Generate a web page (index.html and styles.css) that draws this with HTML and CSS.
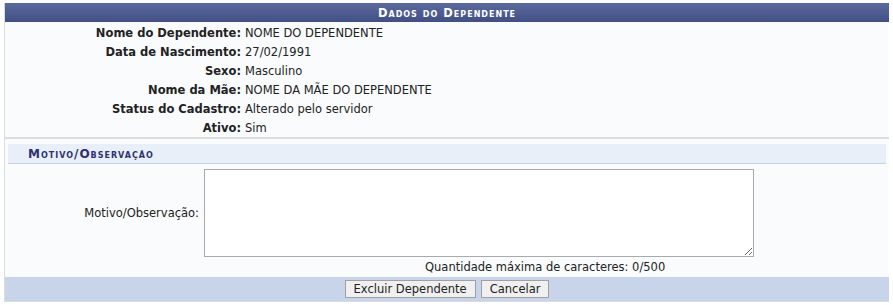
FILE: index.html
```html
<!DOCTYPE html>
<html lang="pt-BR">
<head>
    <meta charset="UTF-8">
    <title>Dados do Dependente</title>
    <link rel="stylesheet" href="styles.css">
</head>
<body>
    <div class="formulario">
        <div class="caption">Dados do Dependente</div>

        <div class="dados">
            <div class="rotulo">Nome do Dependente:</div><div class="valor">NOME DO DEPENDENTE</div>
            <div class="rotulo">Data de Nascimento:</div><div class="valor">27/02/1991</div>
            <div class="rotulo">Sexo:</div><div class="valor">Masculino</div>
            <div class="rotulo">Nome da Mãe:</div><div class="valor">NOME DA MÃE DO DEPENDENTE</div>
            <div class="rotulo">Status do Cadastro:</div><div class="valor">Alterado pelo servidor</div>
            <div class="rotulo">Ativo:</div><div class="valor">Sim</div>
        </div>

        <div class="subtitulo">Motivo/Observação</div>

        <div class="motivo">
            <label for="motivo">Motivo/Observação:</label>
            <textarea id="motivo"></textarea>
            <div class="contador">Quantidade máxima de caracteres: <span id="qtd">0</span>/500</div>
        </div>

        <div class="rodape">
            <button type="button">Excluir Dependente</button>
            <button type="button">Cancelar</button>
        </div>
    </div>

    <script>
        document.getElementById('motivo').addEventListener('input', function() {
            document.getElementById('qtd').textContent = this.value.length;
        });
    </script>
</body>
</html>
```

FILE: styles.css
```css
body {
    margin: 3px 4px;
    font-family: Verdana, "DejaVu Sans", sans-serif;
    font-size: 11.5px;
    color: #222;
}
.formulario {
    width: 884px;
    background-color: #f9fbfd;
    border-left: 1px solid #dcdcdc;
    border-right: 1px solid #dcdcdc;
    border-bottom: 1px solid #dcdcdc;
}
.caption {
    height: 19px;
    line-height: 20px;
    text-align: center;
    color: #fff;
    font-weight: bold;
    font-variant: small-caps;
    letter-spacing: 1px;
    background: linear-gradient(#5b6a9d, #414f85);
}
.dados {
    display: grid;
    grid-template-columns: 240px 1fr;
    grid-auto-rows: 19px;
    align-items: center;
    padding-top: 1px;
    border-bottom: 2px solid #dcdcdc;
}
.rotulo {
    text-align: right;
    font-weight: bold;
    padding-right: 4px;
}
.subtitulo {
    margin: 5px 3px 0;
    height: 19px;
    line-height: 20px;
    padding-left: 20px;
    background-color: #e9eff8;
    border-bottom: 1px solid #c4d2eb;
    color: #2f3070;
    font-weight: bold;
    font-variant: small-caps;
    letter-spacing: 1px;
    font-size: 12px;
}
.motivo {
    display: grid;
    grid-template-columns: 194px 550px;
    column-gap: 5px;
    align-items: center;
    padding-top: 5px;
}
.motivo label {
    text-align: right;
}
.motivo textarea {
    width: 550px;
    height: 88px;
    box-sizing: border-box;
    border: 1px solid #aaa;
    background: #fff;
    margin: 0;
    display: block;
}
.contador {
    grid-column: 2;
    height: 20px;
    line-height: 20px;
    padding-left: 221px;
}
.rodape {
    background-color: #c8d4ea;
    height: 24px;
    display: flex;
    justify-content: center;
    align-items: center;
    gap: 5px;
}
.rodape button {
    font-family: Verdana, "DejaVu Sans", sans-serif;
    font-size: 11.5px;
    height: 18px;
    padding: 0 8px;
    background-color: #f0f0f0;
    border: 1px solid #a0a0a0;
    color: #222;
}
```
